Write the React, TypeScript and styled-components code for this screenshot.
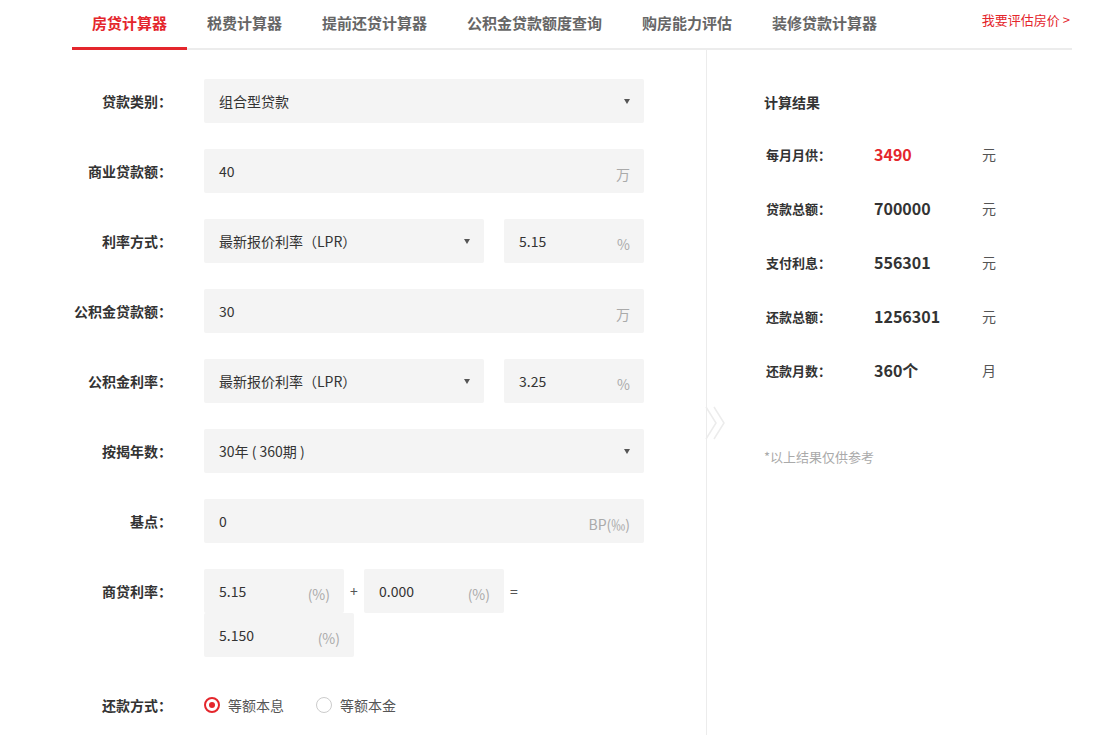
import React from "react";
import styled, { createGlobalStyle } from "styled-components";

const G = createGlobalStyle`
  body{margin:0;background:#fff;font-family:"Noto Sans CJK SC","Noto Sans",sans-serif;font-size:14px;color:#333;}
`;
const Page = styled.div`width:1105px;height:735px;overflow:hidden;padding-left:72px;box-sizing:border-box;`;
const Tabs = styled.div`display:flex;align-items:stretch;height:50px;width:1000px;border-bottom:2px solid #ececec;box-sizing:border-box;`;
const Tab = styled.div<{ $on?: boolean }>`
  padding:0 20px 2px;display:flex;align-items:center;font-size:15px;font-weight:bold;
  color:${p => (p.$on ? "#e4262c" : "#666")};
  border-bottom:3px solid ${p => (p.$on ? "#e4262c" : "transparent")};margin-bottom:-2px;
`;
const TabSpacer = styled.div`flex:1;`;
const Link = styled.div`display:flex;align-items:center;color:#e4262c;font-size:13px;padding-bottom:9px;padding-right:2px;`;
const Body = styled.div`display:flex;`;
const Form = styled.div`width:634px;padding-top:29px;border-right:1px solid #ececec;position:relative;min-height:700px;`;
const Row = styled.div<{ $mb?: number }>`display:flex;align-items:flex-start;margin-bottom:${p => p.$mb ?? 26}px;`;
const Label = styled.div<{ $h?: number }>`width:100px;white-space:nowrap;text-align:right;font-weight:bold;height:${p => p.$h ?? 44}px;line-height:${p => p.$h ?? 44}px;margin-right:32px;`;
const Fields = styled.div`display:flex;flex-wrap:wrap;width:460px;align-items:center;`;
const Break = styled.div`flex-basis:100%;height:0;`;
const Box = styled.div<{ $w: number; $ml?: number }>`
  width:${p => p.$w}px;height:44px;background:#f4f4f4;border-radius:2px;margin-left:${p => p.$ml ?? 0}px;
  display:flex;align-items:center;justify-content:space-between;padding:0 14px 0 15px;box-sizing:border-box;color:#333;
`;
const Unit = styled.span`color:#aaa;align-self:flex-end;margin-bottom:9px;font-size:14px;`;
const Caret = styled.span`width:0;height:0;border-left:3.5px solid transparent;border-right:3.5px solid transparent;border-top:5px solid #555;`;
const Op = styled.span`width:20px;text-align:center;color:#555;`;
const Radios = styled.div`display:flex;align-items:center;height:20px;gap:8px;`;
const Radio = styled.span<{ $on?: boolean }>`
  width:16px;height:16px;border-radius:50%;box-sizing:border-box;border:${p => (p.$on ? "2px solid #e4262c" : "1.5px solid #ccc")};
  display:inline-flex;align-items:center;justify-content:center;
  &::after{content:"";width:6px;height:6px;border-radius:50%;background:${p => (p.$on ? "#e4262c" : "transparent")};}
`;
const RadioText = styled.span`margin-right:24px;color:#555;`;
const Chevron = styled.svg`position:absolute;right:-22px;top:355px;`;
const Result = styled.div`padding:42px 0 0 57px;`;
const Title = styled.div`font-weight:bold;font-size:14px;margin-bottom:15px;`;
const RRow = styled.div`display:flex;align-items:center;height:54px;font-weight:bold;`;
const RLabel = styled.div`width:108px;padding-left:2px;font-size:13px;`;
const RVal = styled.div<{ $red?: boolean }>`width:108px;font-size:16px;color:${p => (p.$red ? "#e4262c" : "#333")};`;
const RUnit = styled.div`font-weight:normal;color:#555;`;
const Note = styled.div`color:#aaa;font-size:13px;margin-top:50px;`;

const Sel = ({ w, t }: { w: number; t: string }) => (<Box $w={w}><span>{t}</span><Caret /></Box>);

export default function App() {
  const results: [string, string, string, boolean?][] = [
    ["每月月供：", "3490", "元", true], ["贷款总额：", "700000", "元"], ["支付利息：", "556301", "元"],
    ["还款总额：", "1256301", "元"], ["还款月数：", "360个", "月"],
  ];
  return (
    <Page>
      <G />
      <Tabs>
        <Tab $on>房贷计算器</Tab><Tab>税费计算器</Tab><Tab>提前还贷计算器</Tab><Tab>公积金贷款额度查询</Tab>
        <Tab>购房能力评估</Tab><Tab>装修贷款计算器</Tab><TabSpacer /><Link>我要评估房价 &gt;</Link>
      </Tabs>
      <Body>
        <Form>
          <Row><Label>贷款类别：</Label><Fields><Sel w={440} t="组合型贷款" /></Fields></Row>
          <Row><Label>商业贷款额：</Label><Fields><Box $w={440}><span>40</span><Unit>万</Unit></Box></Fields></Row>
          <Row><Label>利率方式：</Label><Fields><Sel w={280} t="最新报价利率（LPR）" /><Box $w={140} $ml={20}><span>5.15</span><Unit>%</Unit></Box></Fields></Row>
          <Row><Label>公积金贷款额：</Label><Fields><Box $w={440}><span>30</span><Unit>万</Unit></Box></Fields></Row>
          <Row><Label>公积金利率：</Label><Fields><Sel w={280} t="最新报价利率（LPR）" /><Box $w={140} $ml={20}><span>3.25</span><Unit>%</Unit></Box></Fields></Row>
          <Row><Label>按揭年数：</Label><Fields><Sel w={440} t="30年 ( 360期 )" /></Fields></Row>
          <Row><Label>基点：</Label><Fields><Box $w={440}><span>0</span><Unit>BP(‰)</Unit></Box></Fields></Row>
          <Row $mb={38}><Label>商贷利率：</Label><Fields>
            <Box $w={140}><span>5.15</span><Unit>(%)</Unit></Box><Op>+</Op>
            <Box $w={140}><span>0.000</span><Unit>(%)</Unit></Box><Op>=</Op>
            <Break />
            <Box $w={150}><span>5.150</span><Unit>(%)</Unit></Box>
          </Fields></Row>
          <Row><Label $h={20}>还款方式：</Label><Radios><Radio $on /><RadioText>等额本息</RadioText><Radio /><RadioText>等额本金</RadioText></Radios></Row>
          <Chevron width="24" height="36" viewBox="0 0 24 36"><path d="M2 2 L12 18 L2 34 M10 2 L20 18 L10 34" fill="none" stroke="#ececec" strokeWidth="1.5" /></Chevron>
        </Form>
        <Result>
          <Title>计算结果</Title>
          {results.map(([l, v, u, r]) => (
            <RRow key={l}><RLabel>{l}</RLabel><RVal $red={r}>{v}</RVal><RUnit>{u}</RUnit></RRow>
          ))}
          <Note>*以上结果仅供参考</Note>
        </Result>
      </Body>
    </Page>
  );
}
